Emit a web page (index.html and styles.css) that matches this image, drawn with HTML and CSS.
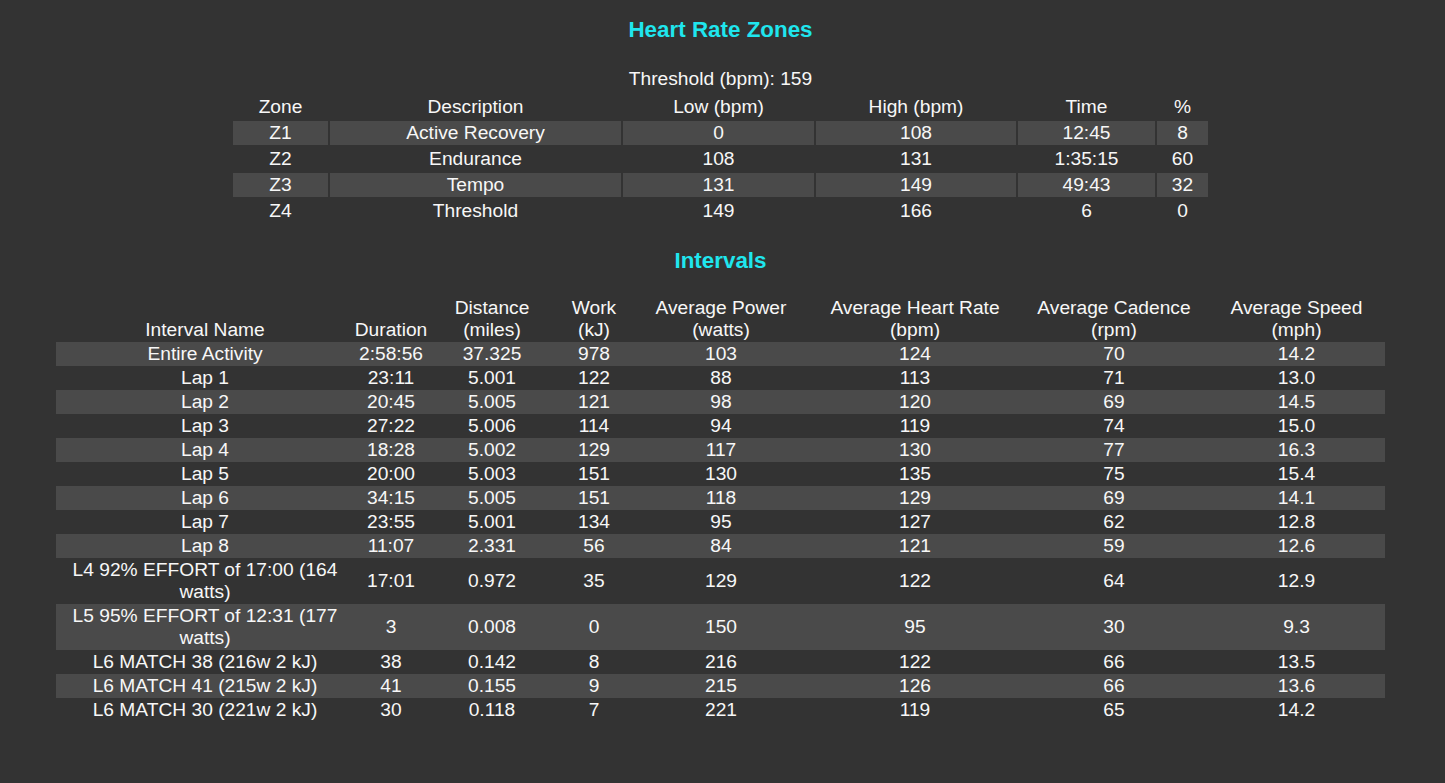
FILE: index.html
```html
<!DOCTYPE html>
<html lang="en">
<head>
<meta charset="utf-8">
<title>Heart Rate Zones and Intervals</title>
<link rel="stylesheet" href="styles.css">
</head>
<body>
<main class="page">
  <h2 class="section-title">Heart Rate Zones</h2>
  <div class="threshold">Threshold (bpm): 159</div>
  <table class="zones">
    <colgroup>
      <col class="z-zone"><col class="z-desc"><col class="z-low"><col class="z-high"><col class="z-time"><col class="z-pct">
    </colgroup>
    <thead>
      <tr><th>Zone</th><th>Description</th><th>Low (bpm)</th><th>High (bpm)</th><th>Time</th><th>%</th></tr>
    </thead>
    <tbody>
      <tr><td>Z1</td><td>Active Recovery</td><td>0</td><td>108</td><td>12:45</td><td>8</td></tr>
      <tr><td>Z2</td><td>Endurance</td><td>108</td><td>131</td><td>1:35:15</td><td>60</td></tr>
      <tr><td>Z3</td><td>Tempo</td><td>131</td><td>149</td><td>49:43</td><td>32</td></tr>
      <tr><td>Z4</td><td>Threshold</td><td>149</td><td>166</td><td>6</td><td>0</td></tr>
    </tbody>
  </table>

  <h2 class="section-title intervals-title">Intervals</h2>
  <table class="intervals">
    <colgroup>
      <col class="i-name"><col class="i-dur"><col class="i-dist"><col class="i-work"><col class="i-power"><col class="i-hr"><col class="i-cad"><col class="i-speed">
    </colgroup>
    <thead>
      <tr>
        <th>Interval Name</th>
        <th>Duration</th>
        <th>Distance<br>(miles)</th>
        <th>Work<br>(kJ)</th>
        <th>Average Power<br>(watts)</th>
        <th>Average Heart Rate<br>(bpm)</th>
        <th>Average Cadence<br>(rpm)</th>
        <th>Average Speed<br>(mph)</th>
      </tr>
    </thead>
    <tbody>
      <tr><td>Entire Activity</td><td>2:58:56</td><td>37.325</td><td>978</td><td>103</td><td>124</td><td>70</td><td>14.2</td></tr>
      <tr><td>Lap 1</td><td>23:11</td><td>5.001</td><td>122</td><td>88</td><td>113</td><td>71</td><td>13.0</td></tr>
      <tr><td>Lap 2</td><td>20:45</td><td>5.005</td><td>121</td><td>98</td><td>120</td><td>69</td><td>14.5</td></tr>
      <tr><td>Lap 3</td><td>27:22</td><td>5.006</td><td>114</td><td>94</td><td>119</td><td>74</td><td>15.0</td></tr>
      <tr><td>Lap 4</td><td>18:28</td><td>5.002</td><td>129</td><td>117</td><td>130</td><td>77</td><td>16.3</td></tr>
      <tr><td>Lap 5</td><td>20:00</td><td>5.003</td><td>151</td><td>130</td><td>135</td><td>75</td><td>15.4</td></tr>
      <tr><td>Lap 6</td><td>34:15</td><td>5.005</td><td>151</td><td>118</td><td>129</td><td>69</td><td>14.1</td></tr>
      <tr><td>Lap 7</td><td>23:55</td><td>5.001</td><td>134</td><td>95</td><td>127</td><td>62</td><td>12.8</td></tr>
      <tr><td>Lap 8</td><td>11:07</td><td>2.331</td><td>56</td><td>84</td><td>121</td><td>59</td><td>12.6</td></tr>
      <tr><td>L4 92% EFFORT of 17:00 (164 watts)</td><td>17:01</td><td>0.972</td><td>35</td><td>129</td><td>122</td><td>64</td><td>12.9</td></tr>
      <tr><td>L5 95% EFFORT of 12:31 (177 watts)</td><td>3</td><td>0.008</td><td>0</td><td>150</td><td>95</td><td>30</td><td>9.3</td></tr>
      <tr><td>L6 MATCH 38 (216w 2 kJ)</td><td>38</td><td>0.142</td><td>8</td><td>216</td><td>122</td><td>66</td><td>13.5</td></tr>
      <tr><td>L6 MATCH 41 (215w 2 kJ)</td><td>41</td><td>0.155</td><td>9</td><td>215</td><td>126</td><td>66</td><td>13.6</td></tr>
      <tr><td>L6 MATCH 30 (221w 2 kJ)</td><td>30</td><td>0.118</td><td>7</td><td>221</td><td>119</td><td>65</td><td>14.2</td></tr>
    </tbody>
  </table>
</main>
</body>
</html>
```

FILE: styles.css
```css
html, body {
  margin: 0;
  padding: 0;
  background: #333333;
}

body {
  color: #f7f7f7;
  font-family: "Liberation Sans", Arial, sans-serif;
  font-size: 19.2px;
  line-height: 22px;
}

.page {
  padding: 17px 4px 40px 0;
  text-align: center;
}

.section-title {
  margin: 0;
  font-size: 22.4px;
  line-height: 26px;
  font-weight: bold;
  color: #1fe6ee;
}

.threshold {
  margin-top: 25px;
  line-height: 22px;
}

table {
  table-layout: fixed;
  margin-left: auto;
  margin-right: auto;
}

th, td {
  padding: 1px 0;
  font-weight: normal;
  text-align: center;
  line-height: 22px;
}

/* Heart rate zones */
.zones {
  margin-top: 3px;
  width: 979px;
  border-spacing: 2px;
}

.z-zone { width: 95px; }
.z-desc { width: 291px; }
.z-low { width: 191px; }
.z-high { width: 200px; }
.z-time { width: 137px; }
.z-pct { width: 51px; }

.zones tbody tr:nth-child(odd) td {
  background: #4a4a4a;
}

/* Intervals */
.intervals-title {
  margin-top: 23px;
}

.intervals {
  margin-top: 22px;
  width: 1329px;
  border-spacing: 0;
}

.intervals th {
  vertical-align: bottom;
}

.intervals td {
  vertical-align: middle;
}

.i-name { width: 298px; }
.i-dur { width: 74px; }
.i-dist { width: 128px; }
.i-work { width: 76px; }
.i-power { width: 178px; }
.i-hr { width: 210px; }
.i-cad { width: 188px; }
.i-speed { width: 177px; }

.intervals tbody tr:nth-child(odd) td {
  background: #4a4a4a;
}
```
